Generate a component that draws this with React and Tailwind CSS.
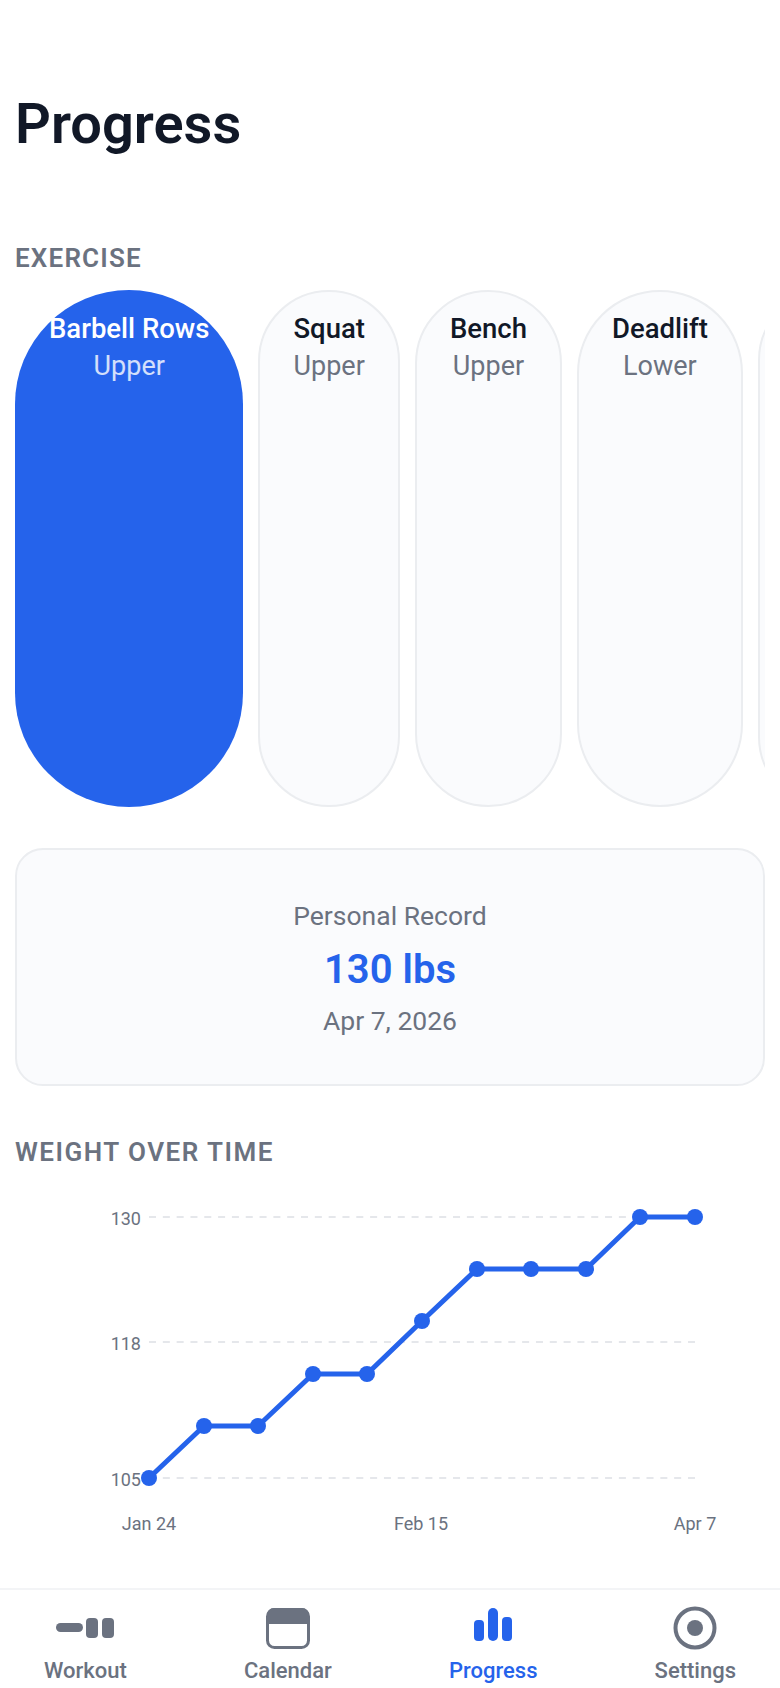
const exercises = [
  { name: 'Squat', group: 'Upper' },
  { name: 'Bench', group: 'Upper' },
  { name: 'Deadlift', group: 'Lower' },
];

const points = [
  [149, 261], [204, 209], [258, 209], [313, 157], [367, 157],
  [422, 104], [477, 52], [531, 52], [586, 52], [640, 0], [695, 0],
];

const WeightChart = () => {
  const top = 17;
  const line = points.map(([x, y]) => `${x},${y + top}`).join(' ');
  return (
    <svg width="780" height="340" viewBox="0 0 780 340" className="block">
      {[17, 142, 278].map((y) => (
        <line key={y} x1="149" x2="695" y1={y} y2={y} stroke="#e5e7eb" strokeWidth="2" strokeDasharray="7 6.82" />
      ))}
      <g fill="#6b7280" fontSize="18" fontFamily="Roboto, sans-serif">
        <text x="141" y="25" textAnchor="end">130</text>
        <text x="141" y="150" textAnchor="end">118</text>
        <text x="141" y="286" textAnchor="end">105</text>
        <text x="149" y="330" textAnchor="middle">Jan 24</text>
        <text x="421" y="330" textAnchor="middle">Feb 15</text>
        <text x="695" y="330" textAnchor="middle">Apr 7</text>
      </g>
      <polyline points={line} fill="none" stroke="#2563eb" strokeWidth="5" strokeLinejoin="round" />
      {points.map(([x, y]) => (
        <circle key={x} cx={x} cy={y + top} r="8" fill="#2563eb" />
      ))}
    </svg>
  );
};

const WorkoutIcon = () => (
  <svg width="58" height="44" viewBox="0 0 58 44" fill="#6b7280">
    <rect x="0" y="17" width="27" height="9" rx="4.5" />
    <rect x="30" y="12" width="12" height="20" rx="4" />
    <rect x="46" y="12" width="12" height="20" rx="4" />
  </svg>
);

const CalendarIcon = () => (
  <svg width="44" height="44" viewBox="0 0 44 44">
    <rect x="1.5" y="3.5" width="41" height="38" rx="7" fill="none" stroke="#6b7280" strokeWidth="3" />
    <path d="M8 2h28a7 7 0 0 1 7 7v9H1V9a7 7 0 0 1 7-7z" fill="#6b7280" />
  </svg>
);

const ProgressIcon = () => (
  <svg width="38" height="44" viewBox="0 0 38 44" fill="#2563eb">
    <rect x="0" y="14" width="10" height="21" rx="4" />
    <rect x="14" y="2" width="10" height="33" rx="5" />
    <rect x="28" y="11" width="10" height="24" rx="4" />
  </svg>
);

const SettingsIcon = () => (
  <svg width="44" height="44" viewBox="0 0 44 44">
    <circle cx="22" cy="22" r="19.5" fill="none" stroke="#6b7280" strokeWidth="4" />
    <circle cx="22" cy="22" r="8" fill="#6b7280" />
  </svg>
);

const tabs = [
  { label: 'Workout', Icon: WorkoutIcon },
  { label: 'Calendar', Icon: CalendarIcon },
  { label: 'Progress', Icon: ProgressIcon, active: true },
  { label: 'Settings', Icon: SettingsIcon },
];

const App = () => {
  return (
    <div className="w-[780px] h-[1688px] bg-white flex flex-col overflow-hidden font-['Roboto',sans-serif]">
      <div className="flex-1 min-h-0">
        <h1 className="pt-[92px] px-[15px] text-[56px] leading-[64px] font-semibold text-[#111827]">Progress</h1>

        <p className="mt-[87px] px-[15px] text-[26px] leading-[30px] font-semibold tracking-[1.2px] text-[#6b7280]">EXERCISE</p>

        <div className="mt-[17px] mx-[15px] flex gap-[15px] overflow-hidden">
          <div className="shrink-0 h-[517px] rounded-full bg-[#2563eb] px-[34px] py-[21px] text-center">
            <p className="text-[27.5px] leading-[36px] font-medium text-white">Barbell Rows</p>
            <p className="text-[27px] leading-[38px] text-white/80">Upper</p>
          </div>
          {exercises.map((ex) => (
            <div key={ex.name} className="shrink-0 h-[517px] rounded-full bg-[#fafbfd] border-2 border-[#ebedf0] px-[33px] py-[19px] text-center">
              <p className="text-[27.5px] leading-[36px] font-medium text-[#111827]">{ex.name}</p>
              <p className="text-[27px] leading-[38px] text-[#6b7280]">{ex.group}</p>
            </div>
          ))}
          <div className="shrink-0 w-[140px] h-[517px] rounded-full bg-[#fafbfd] border-2 border-[#ebedf0]"></div>
        </div>

        <div className="mt-[41px] mx-[15px] h-[238px] rounded-[28px] bg-[#fafbfd] border-2 border-[#ebedf0] flex flex-col items-center justify-center pt-[2px]">
          <p className="text-[26.5px] leading-[38px] text-[#6b7280]">Personal Record</p>
          <p className="mt-[9px] text-[40px] leading-[52px] font-semibold text-[#2563eb]">130 lbs</p>
          <p className="mt-[6px] text-[26.5px] leading-[38px] text-[#6b7280]">Apr 7, 2026</p>
        </div>

        <p className="mt-[51px] px-[15px] text-[26px] leading-[30px] font-semibold tracking-[1.5px] text-[#6b7280]">WEIGHT OVER TIME</p>

        <div className="mt-[33px]">
          <WeightChart />
        </div>
      </div>

      <nav className="h-[100px] border-t-2 border-[#f3f4f6] flex justify-between px-[44px] pt-[16px]">
        {tabs.map(({ label, Icon, active }) => (
          <div key={label} className="flex flex-col items-center">
            <Icon />
            <span className={`mt-[7px] text-[22px] leading-[28px] font-medium ${active ? 'text-[#2563eb]' : 'text-[#6b7280]'}`}>{label}</span>
          </div>
        ))}
      </nav>
    </div>
  );
};

export default App;
